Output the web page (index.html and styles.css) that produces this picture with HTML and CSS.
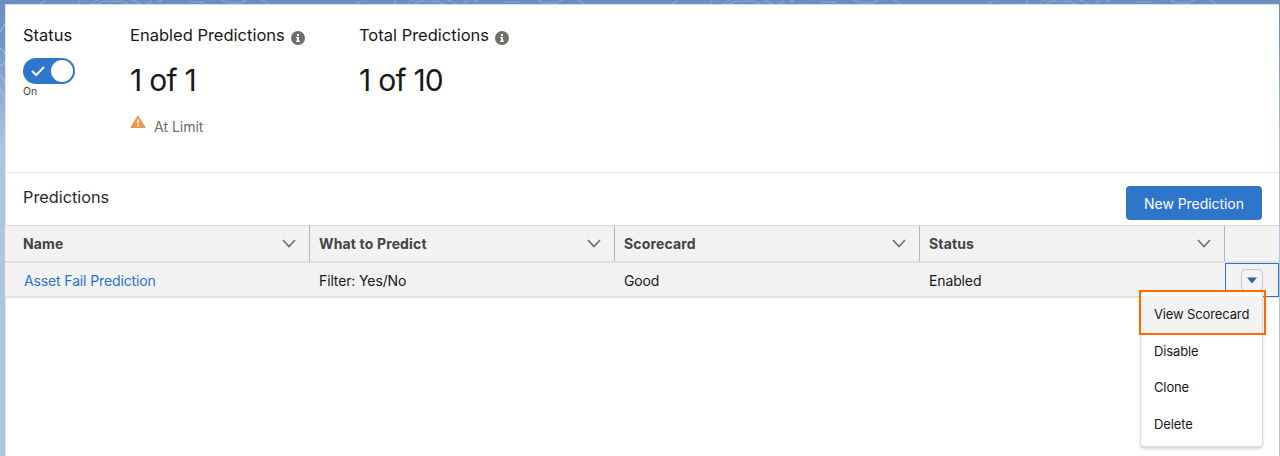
FILE: index.html
```html
<!DOCTYPE html>
<html lang="en">
<head>
    <meta charset="UTF-8">
    <meta name="viewport" content="width=device-width, initial-scale=1.0">
    <title>Predictions</title>
    <link rel="stylesheet" href="styles.css">
</head>
<body>
    <!-- Contour lines behind the page -->
    <svg class="backdrop" width="1280" height="456" aria-hidden="true">
        <defs>
            <pattern id="contours" width="316" height="456" patternUnits="userSpaceOnUse" patternTransform="translate(77 0)">
                <g fill="none" stroke="#8eabd0" stroke-width="1">
                    <path d="M1 4q3-3 1-5M15 4q4-5 11-5M20 4q6-4 12-3M33 2l11-1 9 4M55 0l9 4M70 3l5-2M81 1l4 0M112 2h15M145 0l6 3h13l6-4M184-1l7 5M279 4l5-3"/>
                </g>
            </pattern>
        </defs>
        <rect width="1280" height="4" fill="url(#contours)"/>
        <path d="M0 32l5-8M0 48q4 2 5 6M0 66l5-3M0 74l5 9M0 89l5 10M0 110q3-6 5-5M0 127l5-6" fill="none" stroke="#a9c0de"/>
    </svg>

    <main class="page">
        <section class="summary">
            <div class="stat stat-status">
                <h2>Status</h2>
                <div class="toggle">
                    <svg width="14" height="12" viewBox="0 0 14 12"><path d="M1 6l4.200 4L13 2" fill="none" stroke="#fff" stroke-width="2"/></svg>
                    <span class="knob"></span>
                </div>
                <span class="toggle-label">On</span>
            </div>
            <div class="stat stat-enabled">
                <h2>Enabled Predictions
                    <svg class="info" width="14" height="14" viewBox="0 0 14 14"><circle cx="7" cy="7" r="7" fill="#706e6b"/><path d="M6 3h2v2H6zM5.2 6H8v3.8h1V11H5V9.800h1V7.200h-.8z" fill="#fff"/></svg>
                </h2>
                <p class="value">1 of 1</p>
                <p class="limit">
                    <svg width="16" height="14" viewBox="0 0 16 14"><path d="M8 .8L15.200 12.500H.8z" fill="#f0954f" stroke="#f0954f" stroke-linejoin="round"/><path d="M8 4.500v4M8 9.500v1.500" stroke="#fff" stroke-width="1.500"/></svg>
                    <span>At Limit</span>
                </p>
            </div>
            <div class="stat">
                <h2>Total Predictions
                    <svg class="info" width="14" height="14" viewBox="0 0 14 14"><circle cx="7" cy="7" r="7" fill="#706e6b"/><path d="M6 3h2v2H6zM5.2 6H8v3.8h1V11H5V9.800h1V7.200h-.8z" fill="#fff"/></svg>
                </h2>
                <p class="value">1 of 10</p>
            </div>
        </section>

        <section class="predictions">
            <div class="list-header">
                <h3>Predictions</h3>
                <button class="new-btn">New Prediction</button>
            </div>

            <div class="row head">
                <div class="cell">Name<svg width="14" height="9" viewBox="0 0 14 9"><path d="M1 1l6 6.500L13 1"/></svg></div>
                <div class="cell">What to Predict<svg width="14" height="9" viewBox="0 0 14 9"><path d="M1 1l6 6.500L13 1"/></svg></div>
                <div class="cell">Scorecard<svg width="14" height="9" viewBox="0 0 14 9"><path d="M1 1l6 6.500L13 1"/></svg></div>
                <div class="cell">Status<svg width="14" height="9" viewBox="0 0 14 9"><path d="M1 1l6 6.500L13 1"/></svg></div>
                <div class="cell"></div>
            </div>

            <div class="row item">
                <div class="cell"><a class="link" href="#">Asset Fail Prediction</a></div>
                <div class="cell">Filter: Yes/No</div>
                <div class="cell">Good</div>
                <div class="cell">Enabled</div>
                <div class="cell action">
                    <button class="menu-btn" aria-label="Show actions">
                        <svg width="10" height="7" viewBox="0 0 10 7"><path d="M0 .5h10L5 6.500z" fill="#3a5c9c"/></svg>
                    </button>
                    <ul class="menu">
                        <li class="active">View Scorecard</li>
                        <li>Disable</li>
                        <li>Clone</li>
                        <li>Delete</li>
                    </ul>
                </div>
            </div>
        </section>
    </main>
</body>
</html>
```
FILE: styles.css
```css
* {
    margin: 0;
    padding: 0;
    box-sizing: border-box;
}

body {
    height: 456px;
    padding: 4px 1px 0 5px;
    overflow: hidden;
    font-family: Inter, "Liberation Sans", sans-serif;
    font-size: 14px;
    color: #181818;
    background: linear-gradient(#6a8fbf 0, #7196c5 40px, #b0c4df 150px, #b0c4df 100%);
}

.backdrop {
    position: absolute;
    top: 0;
    left: 0;
}

.page {
    position: relative;
    height: 452px;
    background: #fff;
    border-top: 1px solid #d5e0ee;
    box-shadow: inset 1px 0 #dfe7f2;
}

/* Summary */
.summary {
    display: flex;
    height: 168px;
    padding: 19px 18px 0;
    border-bottom: 1px solid #e5e5e5;
}

.stat-status {
    width: 107px;
}

.stat-enabled {
    width: 229px;
}

h2 {
    display: flex;
    align-items: center;
    height: 22px;
    font-size: 16.5px;
    font-weight: 400;
    white-space: nowrap;
}

.info {
    margin: 5px 0 0 6px;
}

.toggle {
    display: flex;
    align-items: center;
    justify-content: space-between;
    width: 52px;
    height: 26px;
    margin: 11.5px 0 0 -0.5px;
    padding: 0 2px 0 8px;
    border-radius: 13px;
    background: #2e75cc;
}

.knob {
    width: 22px;
    height: 22px;
    border-radius: 50%;
    background: #fff;
}

.toggle-label {
    display: block;
    margin-top: 1.5px;
    font-size: 10.5px;
    line-height: 14px;
    color: #3e3e3c;
}

.value {
    margin-top: 15px;
    font-size: 30px;
    line-height: 38px;
    letter-spacing: -0.75px;
}

.limit {
    display: flex;
    gap: 8px;
    height: 20px;
    margin-top: 16px;
    color: #706e6b;
}

.limit span {
    line-height: 24px;
}

/* Predictions list */
.list-header {
    display: flex;
    justify-content: space-between;
    height: 52px;
    padding: 13px 17px 0 18px;
}

h3 {
    font-size: 16.3px;
    font-weight: 400;
    line-height: 23px;
    color: #2b2826;
}

.new-btn {
    width: 136px;
    height: 34px;
    border: 0;
    border-radius: 4px;
    background: #2e75cc;
    color: #fff;
    font-family: inherit;
    font-size: 14px;
    letter-spacing: -0.05px;
}

.row {
    display: grid;
    grid-template-columns: 305px 305px 305px 305px 1fr;
    background: #f2f2f2;
}

.cell {
    display: flex;
    align-items: center;
    padding-left: 9px;
    white-space: nowrap;
}

.cell:first-child {
    padding-left: 18px;
}

.head {
    height: 38px;
    border-top: 1px solid #dddbda;
    border-bottom: 2px solid #dfdfdf;
    font-weight: 700;
    letter-spacing: 0.15px;
    color: #444;
}

.head .cell {
    justify-content: space-between;
    padding-right: 13px;
    border-right: 1px solid #b5b5b5;
}

.head .cell:last-child {
    border-right: 0;
}

.head path {
    fill: none;
    stroke: #706e6b;
    stroke-width: 1.6;
}

.item {
    height: 35px;
    border-bottom: 2px solid #e2e2e2;
    letter-spacing: -0.13px;
}

.item .cell:first-child {
    padding-left: 19px;
}

.link {
    color: #2574d2;
    text-decoration: none;
}

.action {
    position: relative;
    height: 34px;
    padding: 0 0 0 15px;
    border: 1px solid #2e75cc;
}

.menu-btn {
    display: flex;
    align-items: center;
    justify-content: center;
    width: 22px;
    height: 22px;
    border: 1px solid #c9c7c5;
    border-radius: 4px;
    background: #f3f3f3;
}

/* Row actions menu */
.menu {
    position: absolute;
    top: 27px;
    right: 15px;
    width: 123px;
    height: 156px;
    padding-top: 4px;
    border: 1px solid #dddbda;
    border-radius: 4px;
    background: #fff;
    box-shadow: 0 2px 3px rgba(0, 0, 0, 0.16);
    list-style: none;
    font-size: 13px;
}

.menu li {
    height: 36.6px;
    padding-left: 13px;
    line-height: 36px;
}

.menu .active {
    background: #f2f2f2;
}

/* Highlight frame around the current entry */
.menu .active::after {
    content: "";
    position: absolute;
    top: -2px;
    left: -2px;
    width: 123px;
    height: 41px;
    border: 2px solid #ff6a00;
}
```
